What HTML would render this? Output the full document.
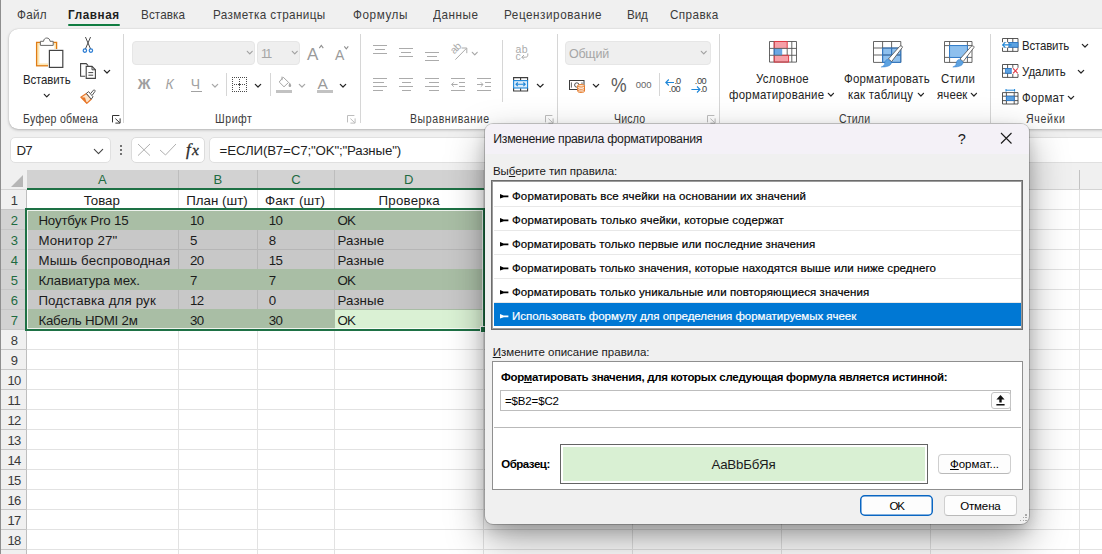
<!DOCTYPE html>
<html lang="ru"><head><meta charset="utf-8"><title>Excel</title>
<style>
*{box-sizing:border-box;margin:0;padding:0}
html,body{width:1102px;height:554px;overflow:hidden;background:#f0f0f0;font-family:"Liberation Sans",sans-serif;color:#242424}
#app{position:absolute;left:0;top:0;width:1102px;height:554px;overflow:hidden;background:#f0f0f0}
.a,.t,svg{position:absolute}
.t{white-space:pre}
svg{overflow:visible}
</style></head><body>
<div id="app">
<div class="t" style="left:17.0px;top:7px;font-size:13.3px;line-height:16px;letter-spacing:0.290px;color:#3b3b3b;transform:scaleX(0.88);transform-origin:0 0;">Файл</div>
<div class="t" style="left:68.3px;top:7px;font-size:13.3px;line-height:16px;letter-spacing:0.667px;color:#1f1f1f;font-weight:bold;transform:scaleX(0.88);transform-origin:0 0;">Главная</div>
<div class="a" style="left:68px;top:24px;width:52px;height:2px;background:#107c41;border-radius:1px"></div>
<div class="t" style="left:140.8px;top:7px;font-size:13.3px;line-height:16px;letter-spacing:0.115px;color:#3b3b3b;transform:scaleX(0.88);transform-origin:0 0;">Вставка</div>
<div class="t" style="left:212.5px;top:7px;font-size:13.3px;line-height:16px;letter-spacing:0.424px;color:#3b3b3b;transform:scaleX(0.88);transform-origin:0 0;">Разметка страницы</div>
<div class="t" style="left:353.0px;top:7px;font-size:13.3px;line-height:16px;letter-spacing:0.661px;color:#3b3b3b;transform:scaleX(0.88);transform-origin:0 0;">Формулы</div>
<div class="t" style="left:432.5px;top:7px;font-size:13.3px;line-height:16px;letter-spacing:0.610px;color:#3b3b3b;transform:scaleX(0.88);transform-origin:0 0;">Данные</div>
<div class="t" style="left:504.2px;top:7px;font-size:13.3px;line-height:16px;letter-spacing:0.628px;color:#3b3b3b;transform:scaleX(0.88);transform-origin:0 0;">Рецензирование</div>
<div class="t" style="left:627.3px;top:7px;font-size:13.3px;line-height:16px;letter-spacing:-0.180px;color:#3b3b3b;transform:scaleX(0.88);transform-origin:0 0;">Вид</div>
<div class="t" style="left:670.3px;top:7px;font-size:13.3px;line-height:16px;letter-spacing:0.453px;color:#3b3b3b;transform:scaleX(0.88);transform-origin:0 0;">Справка</div>
<div class="a" style="left:9px;top:29px;width:1110px;height:100px;background:#fff;border-radius:9px;box-shadow:0 1px 3px rgba(0,0,0,.25),0 0 1px rgba(0,0,0,.2)"></div>
<div class="a" style="left:123px;top:34px;width:1px;height:89px;background:#d6d6d6"></div>
<div class="a" style="left:360px;top:34px;width:1px;height:89px;background:#d6d6d6"></div>
<div class="a" style="left:557px;top:34px;width:1px;height:89px;background:#d6d6d6"></div>
<div class="a" style="left:718.5px;top:34px;width:1px;height:89px;background:#d6d6d6"></div>
<div class="a" style="left:989.5px;top:34px;width:1px;height:89px;background:#d6d6d6"></div>
<div class="t" style="left:22.8px;top:112px;font-size:12px;line-height:14px;letter-spacing:0.326px;color:#3b3b3b;transform:scaleX(0.88);transform-origin:0 0;">Буфер обмена</div>
<div class="t" style="left:215.0px;top:112px;font-size:12px;line-height:14px;letter-spacing:0.626px;color:#3b3b3b;transform:scaleX(0.88);transform-origin:0 0;">Шрифт</div>
<div class="t" style="left:410.4px;top:112px;font-size:12px;line-height:14px;letter-spacing:0.654px;color:#3b3b3b;transform:scaleX(0.88);transform-origin:0 0;">Выравнивание</div>
<div class="t" style="left:614.2px;top:112px;font-size:12px;line-height:14px;letter-spacing:0.188px;color:#3b3b3b;transform:scaleX(0.88);transform-origin:0 0;">Число</div>
<div class="t" style="left:838.5px;top:112px;font-size:12px;line-height:14px;letter-spacing:0.175px;color:#3b3b3b;transform:scaleX(0.88);transform-origin:0 0;">Стили</div>
<div class="t" style="left:1026.0px;top:112px;font-size:12px;line-height:14px;letter-spacing:0.792px;color:#3b3b3b;transform:scaleX(0.88);transform-origin:0 0;">Ячейки</div>
<div class="t" style="left:23.3px;top:72px;font-size:13px;line-height:16px;letter-spacing:-0.142px;color:#242424;transform:scaleX(0.88);transform-origin:0 0;">Вставить</div>
<svg style="left:44px;top:94px" width="5.5" height="3.8" viewBox="0 0 5.5 3.8"><path d="M0.3 0.3L2.75 2.8L5.2 0.3" fill="none" stroke="#242424" stroke-width="1.2" stroke-linecap="round" stroke-linejoin="round"/></svg>
<svg style="left:104px;top:70px" width="6" height="4" viewBox="0 0 6 4"><path d="M0.3 0.3L3 3L5.7 0.3" fill="none" stroke="#242424" stroke-width="1.2" stroke-linecap="round" stroke-linejoin="round"/></svg>
<div class="a" style="left:132px;top:41px;width:122.5px;height:24px;background:#efefef;border-radius:4px;border:1px solid #e6e6e6"></div>
<div class="a" style="left:257px;top:41px;width:42.5px;height:24px;background:#efefef;border-radius:4px;border:1px solid #e6e6e6"></div>
<div class="t" style="left:261.0px;top:47px;font-size:12.5px;line-height:15px;letter-spacing:-1.742px;color:#a6a6a6;">11</div>
<svg style="left:247px;top:51px" width="5.5" height="3.8" viewBox="0 0 5.5 3.8"><path d="M0.3 0.3L2.75 2.8L5.2 0.3" fill="none" stroke="#a2a2a2" stroke-width="1.2" stroke-linecap="round" stroke-linejoin="round"/></svg>
<svg style="left:291.5px;top:51px" width="5.5" height="3.8" viewBox="0 0 5.5 3.8"><path d="M0.3 0.3L2.75 2.8L5.2 0.3" fill="none" stroke="#a2a2a2" stroke-width="1.2" stroke-linecap="round" stroke-linejoin="round"/></svg>
<div class="t" style="left:307.0px;top:45px;font-size:17px;line-height:20px;letter-spacing:0.156px;color:#9a9a9a;">A</div>
<div class="t" style="left:335.0px;top:47px;font-size:14px;line-height:17px;letter-spacing:-0.344px;color:#9a9a9a;">A</div>
<div class="t" style="left:137.7px;top:76px;font-size:14px;line-height:17px;letter-spacing:0.644px;color:#9e9e9e;font-weight:bold;">Ж</div>
<div class="t" style="left:165.5px;top:76px;font-size:14px;line-height:17px;letter-spacing:0.834px;color:#a2a2a2;font-style:italic;">К</div>
<div class="t" style="left:190.7px;top:76px;font-size:14px;line-height:17px;letter-spacing:1.456px;color:#a2a2a2;">Ч</div>
<div class="a" style="left:190.5px;top:91px;width:11.5px;height:1px;background:#a2a2a2"></div>
<svg style="left:211.5px;top:84px" width="6" height="4" viewBox="0 0 6 4"><path d="M0.3 0.3L3 3L5.7 0.3" fill="none" stroke="#a8a8a8" stroke-width="1.2" stroke-linecap="round" stroke-linejoin="round"/></svg>
<div class="a" style="left:225.5px;top:73px;width:1px;height:23px;background:#d6d6d6"></div>
<svg style="left:255px;top:84px" width="6" height="4" viewBox="0 0 6 4"><path d="M0.3 0.3L3 3L5.7 0.3" fill="none" stroke="#242424" stroke-width="1.2" stroke-linecap="round" stroke-linejoin="round"/></svg>
<div class="a" style="left:269.5px;top:73px;width:1px;height:23px;background:#d6d6d6"></div>
<svg style="left:299px;top:84px" width="6" height="4" viewBox="0 0 6 4"><path d="M0.3 0.3L3 3L5.7 0.3" fill="none" stroke="#a8a8a8" stroke-width="1.2" stroke-linecap="round" stroke-linejoin="round"/></svg>
<div class="t" style="left:317.5px;top:74px;font-size:15.5px;line-height:19px;letter-spacing:4.156px;color:#9a9a9a;">A</div>
<div class="a" style="left:317px;top:90px;width:15.5px;height:3.2px;background:#c2c2c2"></div>
<div class="a" style="left:276px;top:90px;width:15.5px;height:3.2px;background:#c2c2c2"></div>
<svg style="left:340px;top:84px" width="6" height="4" viewBox="0 0 6 4"><path d="M0.3 0.3L3 3L5.7 0.3" fill="none" stroke="#242424" stroke-width="1.2" stroke-linecap="round" stroke-linejoin="round"/></svg>
<div class="a" style="left:502px;top:40px;width:1px;height:62px;background:#d6d6d6"></div>
<svg style="left:471.5px;top:51.5px" width="5.5" height="3.8" viewBox="0 0 5.5 3.8"><path d="M0.3 0.3L2.75 2.8L5.2 0.3" fill="none" stroke="#a8a8a8" stroke-width="1.2" stroke-linecap="round" stroke-linejoin="round"/></svg>
<svg style="left:536.5px;top:84px" width="6.5" height="4.2" viewBox="0 0 6.5 4.2"><path d="M0.3 0.3L3.25 3.2L6.2 0.3" fill="none" stroke="#242424" stroke-width="1.2" stroke-linecap="round" stroke-linejoin="round"/></svg>
<div class="a" style="left:565px;top:41px;width:145.5px;height:24px;background:#efefef;border-radius:4px;border:1px solid #e6e6e6"></div>
<div class="t" style="left:568.9px;top:47px;font-size:12.5px;line-height:15px;letter-spacing:-0.208px;color:#a6a6a6;">Общий</div>
<svg style="left:700.5px;top:51px" width="5.5" height="3.8" viewBox="0 0 5.5 3.8"><path d="M0.3 0.3L2.75 2.8L5.2 0.3" fill="none" stroke="#a2a2a2" stroke-width="1.2" stroke-linecap="round" stroke-linejoin="round"/></svg>
<svg style="left:592.5px;top:84px" width="6" height="4" viewBox="0 0 6 4"><path d="M0.3 0.3L3 3L5.7 0.3" fill="none" stroke="#242424" stroke-width="1.2" stroke-linecap="round" stroke-linejoin="round"/></svg>
<div class="t" style="left:610.5px;top:74px;font-size:19.5px;line-height:23px;letter-spacing:-0.566px;color:#5a5a5a;transform:scaleX(0.9);transform-origin:0 0;">%</div>
<div class="t" style="left:635.8px;top:79px;font-size:9.5px;line-height:11px;letter-spacing:-0.086px;color:#666;">000</div>
<div class="a" style="left:658.5px;top:73px;width:1px;height:23px;background:#d6d6d6"></div>
<div class="t" style="left:756.4px;top:71px;font-size:13px;line-height:16px;letter-spacing:0.353px;color:#242424;transform:scaleX(0.88);transform-origin:0 0;">Условное</div>
<div class="t" style="left:729.4px;top:87px;font-size:13px;line-height:16px;letter-spacing:0.280px;color:#242424;transform:scaleX(0.88);transform-origin:0 0;">форматирование</div>
<svg style="left:828.4px;top:92.8px" width="5.8" height="4" viewBox="0 0 5.8 4"><path d="M0.3 0.3L2.9 3L5.5 0.3" fill="none" stroke="#242424" stroke-width="1.2" stroke-linecap="round" stroke-linejoin="round"/></svg>
<div class="t" style="left:843.7px;top:71px;font-size:13px;line-height:16px;letter-spacing:0.260px;color:#242424;transform:scaleX(0.88);transform-origin:0 0;">Форматировать</div>
<div class="t" style="left:848.2px;top:87px;font-size:13px;line-height:16px;letter-spacing:0.263px;color:#242424;transform:scaleX(0.88);transform-origin:0 0;">как таблицу</div>
<svg style="left:917.8px;top:92.8px" width="5.8" height="4" viewBox="0 0 5.8 4"><path d="M0.3 0.3L2.9 3L5.5 0.3" fill="none" stroke="#242424" stroke-width="1.2" stroke-linecap="round" stroke-linejoin="round"/></svg>
<div class="t" style="left:940.8px;top:71px;font-size:13px;line-height:16px;letter-spacing:0.237px;color:#242424;transform:scaleX(0.88);transform-origin:0 0;">Стили</div>
<div class="t" style="left:937.3px;top:87px;font-size:13px;line-height:16px;letter-spacing:0.138px;color:#242424;transform:scaleX(0.88);transform-origin:0 0;">ячеек</div>
<svg style="left:971.4px;top:92.8px" width="5.8" height="4" viewBox="0 0 5.8 4"><path d="M0.3 0.3L2.9 3L5.5 0.3" fill="none" stroke="#242424" stroke-width="1.2" stroke-linecap="round" stroke-linejoin="round"/></svg>
<div class="t" style="left:1022.3px;top:38px;font-size:13px;line-height:16px;letter-spacing:-0.198px;color:#242424;transform:scaleX(0.88);transform-origin:0 0;">Вставить</div>
<svg style="left:1082.2px;top:43.5px" width="6" height="4" viewBox="0 0 6 4"><path d="M0.3 0.3L3 3L5.7 0.3" fill="none" stroke="#242424" stroke-width="1.2" stroke-linecap="round" stroke-linejoin="round"/></svg>
<div class="t" style="left:1022.3px;top:64px;font-size:13px;line-height:16px;letter-spacing:0.003px;color:#242424;transform:scaleX(0.88);transform-origin:0 0;">Удалить</div>
<svg style="left:1078px;top:69.5px" width="6" height="4" viewBox="0 0 6 4"><path d="M0.3 0.3L3 3L5.7 0.3" fill="none" stroke="#242424" stroke-width="1.2" stroke-linecap="round" stroke-linejoin="round"/></svg>
<div class="t" style="left:1022.3px;top:90px;font-size:13px;line-height:16px;letter-spacing:0.370px;color:#242424;transform:scaleX(0.88);transform-origin:0 0;">Формат</div>
<svg style="left:1067.7px;top:95.5px" width="6" height="4" viewBox="0 0 6 4"><path d="M0.3 0.3L3 3L5.7 0.3" fill="none" stroke="#242424" stroke-width="1.2" stroke-linecap="round" stroke-linejoin="round"/></svg>
<svg style="left:35px;top:37px" width="29" height="31" viewBox="0 0 29 31">
<rect x="1.6" y="5.4" width="20" height="23.4" fill="#fde7b6" stroke="#e07c14" stroke-width="1.3"/>
<rect x="4.4" y="8" width="15" height="18.4" fill="#fff"/>
<path d="M5.4 8.4V4.3H8.6C8.6 2.4 10 1 11.8 1S15 2.4 15 4.3H18.2V8.4Z" fill="#fff" stroke="#6a6a6a" stroke-width="1"/>
<rect x="13" y="12" width="16" height="19" fill="#fff"/>
<rect x="14.4" y="13.4" width="13.4" height="17" fill="#fff" stroke="#444" stroke-width="1.2"/>
</svg>
<svg style="left:82px;top:37px" width="12" height="17" viewBox="0 0 12 17">
<path d="M3.6 0.4L8.6 12M8.4 0.4L3.4 12" stroke="#4a4a4a" stroke-width="1" fill="none" stroke-linecap="round"/>
<circle cx="2.9" cy="13.6" r="1.7" fill="#fff" stroke="#2b7cd3" stroke-width="1.2"/>
<circle cx="8.9" cy="13.6" r="1.7" fill="#fff" stroke="#2b7cd3" stroke-width="1.2"/>
</svg>
<svg style="left:80px;top:63px" width="16" height="16" viewBox="0 0 16 16">
<path d="M5.2 13.2H0.6V0.6H6.2L8.2 2.6" fill="none" stroke="#444" stroke-width="1.1"/>
<path d="M6.2 3.4H12L15.4 6.8V15.4H6.2Z" fill="#fff" stroke="#444" stroke-width="1.1"/>
<path d="M12 3.4V6.8H15.4" fill="none" stroke="#444" stroke-width="1"/>
<path d="M8.4 9.6H13.2M8.4 12.2H13.2" stroke="#444" stroke-width="1"/>
</svg>
<svg style="left:80px;top:89px" width="17" height="15" viewBox="0 0 17 15">
<path d="M0.8 8.2L6.4 4.4L11.2 10.2L6.8 14.4Z" fill="#fbe3c8" stroke="#e8772a" stroke-width="1.2" stroke-linejoin="round"/>
<path d="M0.8 8.2L6.8 14.4L5 8.6Z" fill="#e8772a"/>
<path d="M6.4 4.4L8.6 2.6L13 7.8L11.2 10.2Z" fill="#fff" stroke="#555" stroke-width="1" stroke-linejoin="round"/>
<path d="M10.6 4.6L13.4 1.2C14.2 0.4 15.6 1.4 15 2.4L12.4 6" fill="#fff" stroke="#555" stroke-width="1" stroke-linejoin="round"/>
</svg>
<svg style="left:111.5px;top:114.5px" width="9" height="9" viewBox="0 0 9 9"><path d="M0.5 7.4V0.5H7.4" fill="none" stroke="#333" stroke-width="1"/><path d="M3.4 3.6L7.8 7.8M8.1 3.4V8.1H3.4" fill="none" stroke="#333" stroke-width="1"/></svg>
<svg style="left:347.3px;top:114.5px" width="9" height="9" viewBox="0 0 9 9"><path d="M0.5 7.4V0.5H7.4" fill="none" stroke="#bdbdbd" stroke-width="1"/><path d="M3.4 3.6L7.8 7.8M8.1 3.4V8.1H3.4" fill="none" stroke="#bdbdbd" stroke-width="1"/></svg>
<svg style="left:544.8px;top:114.5px" width="9" height="9" viewBox="0 0 9 9"><path d="M0.5 7.4V0.5H7.4" fill="none" stroke="#bdbdbd" stroke-width="1"/><path d="M3.4 3.6L7.8 7.8M8.1 3.4V8.1H3.4" fill="none" stroke="#bdbdbd" stroke-width="1"/></svg>
<svg style="left:706.8px;top:114.5px" width="9" height="9" viewBox="0 0 9 9"><path d="M0.5 7.4V0.5H7.4" fill="none" stroke="#bdbdbd" stroke-width="1"/><path d="M3.4 3.6L7.8 7.8M8.1 3.4V8.1H3.4" fill="none" stroke="#bdbdbd" stroke-width="1"/></svg>
<svg style="left:318.6px;top:45.2px" width="4.6" height="3.4" viewBox="0 0 4.6 3.4"><path d="M0.3 3.1L2.3 0.5L4.3 3.1" fill="none" stroke="#8f8f8f" stroke-width="1.1"/></svg>
<svg style="left:343.7px;top:45.8px" width="4.6" height="3.2" viewBox="0 0 4.6 3.2"><path d="M0.3 0.4L2.3 2.8L4.3 0.4" fill="none" stroke="#8f8f8f" stroke-width="1.1"/></svg>
<svg style="left:232px;top:77px" width="16" height="16" viewBox="0 0 16 16">
<g shape-rendering="crispEdges"><path d="M0 0.5H15M0 14.5H15M0.5 0V15M14.5 0V15" fill="none" stroke="#4a4a4a" stroke-width="1" stroke-dasharray="1 1"/>
<path d="M7.5 2V13M2 7.5H13" stroke="#4a4a4a" stroke-width="1" stroke-dasharray="1 1" fill="none"/>
<path d="M6 7.5H9M7.5 6V9" stroke="#4a4a4a" stroke-width="1" fill="none"/></g>
</svg>
<svg style="left:278px;top:76px" width="14" height="12" viewBox="0 0 14 12">
<path d="M5.2 1.2L10.6 6.4L6 10.8L1.2 6Z" fill="none" stroke="#a6a6a6" stroke-width="1" stroke-linejoin="round"/>
<path d="M4 0.6V4.2" stroke="#a6a6a6" stroke-width="1" fill="none"/>
<path d="M11.6 6.6C12.8 8.2 13.2 9 13.2 9.8A1.3 1.3 0 0 1 10.6 9.8C10.6 9 11 8.2 11.6 6.6Z" fill="#a6a6a6"/>
</svg>
<svg style="left:373px;top:45px" width="20" height="20" viewBox="0 0 20 20"><path d="M0 0.5H14M2 4.5H12M0 8.5H14" stroke="#ababab" stroke-width="1" fill="none" shape-rendering="crispEdges"/></svg>
<svg style="left:399px;top:48px" width="20" height="20" viewBox="0 0 20 20"><path d="M0 0.5H14M2 4.5H12M0 8.5H14" stroke="#ababab" stroke-width="1" fill="none" shape-rendering="crispEdges"/></svg>
<svg style="left:425px;top:52px" width="20" height="20" viewBox="0 0 20 20"><path d="M0 0.5H14M2 4.5H12M0 8.5H14" stroke="#ababab" stroke-width="1" fill="none" shape-rendering="crispEdges"/></svg>
<svg style="left:373px;top:78px" width="20" height="20" viewBox="0 0 20 20"><path d="M0 0.5H14M0 4.5H11M0 8.5H14M0 12.5H10" stroke="#ababab" stroke-width="1" fill="none" shape-rendering="crispEdges"/></svg>
<svg style="left:399px;top:78px" width="20" height="20" viewBox="0 0 20 20"><path d="M0 0.5H14M2.5 4.5H11.5M0 8.5H14M2.5 12.5H11.5" stroke="#ababab" stroke-width="1" fill="none" shape-rendering="crispEdges"/></svg>
<svg style="left:425px;top:78px" width="20" height="20" viewBox="0 0 20 20"><path d="M0 0.5H14M3.5 4.5H14M0 8.5H14M3.5 12.5H14" stroke="#ababab" stroke-width="1" fill="none" shape-rendering="crispEdges"/></svg>
<svg style="left:451px;top:78px" width="15" height="13" viewBox="0 0 15 13"><path d="M0 0.5H14M0 12.5H14M8 4.5H14M8 8.5H14" stroke="#ababab" stroke-width="1" fill="none" shape-rendering="crispEdges"/><path d="M6.6 6.5H0.6M2.8 4.3L0.6 6.5L2.8 8.7" stroke="#ababab" stroke-width="1" fill="none"/></svg>
<svg style="left:477px;top:78px" width="15" height="13" viewBox="0 0 15 13"><path d="M0 0.5H14M0 12.5H14M8 4.5H14M8 8.5H14" stroke="#ababab" stroke-width="1" fill="none" shape-rendering="crispEdges"/><path d="M0 6.5H6M3.8 4.3L6 6.5L3.8 8.7" stroke="#ababab" stroke-width="1" fill="none"/></svg>
<svg style="left:449px;top:43px" width="20" height="18" viewBox="0 0 20 18"><text x="0" y="0" font-size="10.5" fill="#ababab" font-family="Liberation Sans,sans-serif" transform="translate(5.2,11.6) rotate(-45)" letter-spacing="-0.3">ab</text><path d="M6.4 16.6L17.4 5.4M12.6 5H17.8V10.2" stroke="#ababab" stroke-width="1" fill="none"/></svg>
<div class="t" style="left:515.4px;top:43px;font-size:10.5px;line-height:13px;letter-spacing:0.506px;color:#ababab;">ab</div>
<div class="t" style="left:515.6px;top:50px;font-size:10.5px;line-height:13px;letter-spacing:-0.050px;color:#ababab;">c</div>
<svg style="left:521px;top:53px" width="8" height="8" viewBox="0 0 8 8"><path d="M6.8 0.4V2.2C6.8 3.6 5.8 4.2 4.6 4.2H0.8M3 2L0.8 4.2L3 6.4" stroke="#ababab" stroke-width="1" fill="none"/></svg>
<svg style="left:513px;top:77.4px" width="15.2" height="14.6" viewBox="0 0 15.2 14.6">
<path d="M0.6 3.6V0.6H14.6V3.6M0.6 11V14H14.6V11M7.6 0.6V3.4M7.6 11.2V14" stroke="#3d3d3d" stroke-width="1.1" fill="none"/>
<rect x="0.6" y="3.6" width="14" height="7.4" fill="#dcecfa" stroke="#1e86d8" stroke-width="1.1"/>
<path d="M3 7.3H12.2M4.8 5.5L3 7.3L4.8 9.1M10.4 5.5L12.2 7.3L10.4 9.1" stroke="#1e86d8" stroke-width="1.1" fill="none"/>
</svg>
<svg style="left:569px;top:80px" width="16.5" height="13" viewBox="0 0 16.5 13">
<rect x="0.5" y="0.5" width="14.5" height="9" fill="#fff" stroke="#3d3d3d" stroke-width="1"/>
<circle cx="7.8" cy="5" r="2.2" fill="none" stroke="#3d3d3d" stroke-width="0.9"/>
<path d="M2.4 2.4V7.6M13 2.4V4" stroke="#3d3d3d" stroke-width="0.8" fill="none"/>
<path d="M8.4 5.4H15.8V11.4C15.8 12.2 14.2 12.8 12.1 12.8S8.4 12.2 8.4 11.4Z" fill="#fff"/>
<ellipse cx="12.1" cy="5.8" rx="3.4" ry="1.3" fill="#fde6cf" stroke="#e3701a" stroke-width="0.9"/>
<path d="M8.7 5.8V11.2C8.7 12 10.2 12.5 12.1 12.5S15.5 12 15.5 11.2V5.8M8.7 8C8.7 8.8 10.2 9.3 12.1 9.3S15.5 8.8 15.5 8M8.7 9.8C8.7 10.6 10.2 11.1 12.1 11.1S15.5 10.6 15.5 9.8" fill="none" stroke="#e3701a" stroke-width="0.9"/>
</svg>
<div class="t" style="left:674.4px;top:76px;font-size:9.2px;line-height:11px;letter-spacing:-0.936px;color:#3d3d3d;">.0</div>
<div class="t" style="left:668.8px;top:84px;font-size:9.2px;line-height:11px;letter-spacing:-0.460px;color:#3d3d3d;">.00</div>
<svg style="left:665px;top:78.5px" width="9.5" height="7" viewBox="0 0 9.5 7"><path d="M9 3.5H0.8M3.8 0.5L0.8 3.5L3.8 6.5" stroke="#1e86d8" stroke-width="1.1" fill="none"/></svg>
<div class="t" style="left:694.8px;top:76px;font-size:9.2px;line-height:11px;letter-spacing:-0.460px;color:#3d3d3d;">.00</div>
<div class="t" style="left:700.4px;top:84px;font-size:9.2px;line-height:11px;letter-spacing:-0.936px;color:#3d3d3d;">.0</div>
<svg style="left:690.6px;top:85.5px" width="10" height="7" viewBox="0 0 10 7"><path d="M0.4 3.5H9M6 0.5L9 3.5L6 6.5" stroke="#1e86d8" stroke-width="1.1" fill="none"/></svg>
<svg style="left:769px;top:41.3px" width="28" height="21.6" viewBox="0 0 28 21.6">
<rect x="5.2" y="0.5" width="13" height="7" fill="#f6a0a8"/>
<rect x="5.2" y="7.5" width="8" height="7" fill="#6aa7e4"/>
<rect x="5.2" y="14.5" width="14.4" height="6.6" fill="#f6a0a8"/>
<path d="M0.5 0.5H27.5V21.1H0.5ZM0.5 7.4H27.5M0.5 14.3H27.5M5.2 0.5V21.1M22.8 0.5V21.1M18.2 7.4V14.3" stroke="#555" stroke-width="0.9" fill="none"/>
<path d="M5.2 0.5H18.2V7.4M5.2 7.4V0.5M5.2 14.3V21.1H19.6V14.3H13.2" stroke="#e03a45" stroke-width="1" fill="none"/>
<path d="M5.2 7.4V14.3" stroke="#2a7bd0" stroke-width="1" fill="none"/>
</svg>
<svg style="left:873px;top:41.3px" width="32" height="28" viewBox="0 0 32 28">
<rect x="9.6" y="7" width="18.2" height="14.4" fill="#8ec0ee"/>
<path d="M0.5 0.5H27.8V21.4H0.5ZM0.5 7H27.8M0.5 14H27.8M9.6 0.5V21.4M18.6 0.5V21.4" stroke="#555" stroke-width="0.9" fill="none"/>
<path d="M9.6 7H27.8V21.4H9.6ZM18.6 7V21.4M9.6 14H27.8" stroke="#2a7bd0" stroke-width="0.9" fill="none"/>
<path d="M29.4 6.4L18.6 20.6L15.4 18L26.6 5.4C27.6 4.4 30.2 5.2 29.4 6.4Z" fill="#fff" stroke="#5a5a5a" stroke-width="0.9" stroke-linejoin="round"/><path d="M15.2 18.4L18.4 21C18.8 23.6 16 26.2 8.2 26C10.4 25.2 11.4 24 11.6 22.4C11.8 19.8 13.4 18.2 15.2 18.4Z" fill="#5da2e0" stroke="#2a7bd0" stroke-width="0.5"/></svg>
<svg style="left:943.7px;top:41.3px" width="32" height="28" viewBox="0 0 32 28">
<path d="M0.5 0.5H28V21.4H0.5ZM0.5 4.6H28M0.5 16.4H28M5.6 0.5V21.4M23.4 0.5V21.4" stroke="#555" stroke-width="0.9" fill="none"/>
<rect x="5.6" y="4.6" width="17.8" height="11.8" fill="#8ec0ee" stroke="#2a7bd0" stroke-width="0.9"/>
<path d="M30 6.4L19.2 20.6L16 18L27.2 5.4C28.2 4.4 30.8 5.2 30 6.4Z" fill="#fff" stroke="#5a5a5a" stroke-width="0.9" stroke-linejoin="round"/><path d="M15.8 18.4L19 21C19.4 23.6 16.6 26.2 8.8 26C11 25.2 12 24 12.2 22.4C12.4 19.8 14 18.2 15.8 18.4Z" fill="#5da2e0" stroke="#2a7bd0" stroke-width="0.5"/></svg>
<svg style="left:1001.7px;top:38px" width="17" height="14" viewBox="0 0 17 14">
<path d="M0.5 0.5H16V13.4H0.5ZM0.5 4.6H16M0.5 9.2H16M5.6 0.5V13.4M10.8 0.5V13.4" stroke="#444" stroke-width="0.9" fill="none"/>
<rect x="-0.4" y="4.2" width="6.4" height="5.4" fill="#fff"/>
<rect x="7" y="4.6" width="9" height="4.6" fill="#5da2e0" stroke="#2a7bd0" stroke-width="0.8"/>
<path d="M9.6 6.9H0.6M3.4 4.1L0.6 6.9L3.4 9.7" stroke="#1e86d8" stroke-width="1.1" fill="none"/>
</svg>
<svg style="left:1001.7px;top:64.2px" width="17" height="14" viewBox="0 0 17 14">
<path d="M0.5 0.5H16V13.4H0.5ZM0.5 4.6H16M0.5 9.2H16M5.6 0.5V13.4M10.8 0.5V13.4" stroke="#444" stroke-width="0.9" fill="none"/>
<rect x="9.6" y="3.8" width="7.4" height="6.2" fill="#fff"/>
<rect x="3.6" y="4.6" width="5.6" height="4.6" fill="#5da2e0" stroke="#2a7bd0" stroke-width="0.8"/>
<path d="M11 4.4L15.8 9.4M15.8 4.4L11 9.4" stroke="#e03a45" stroke-width="1.1" fill="none"/>
</svg>
<svg style="left:1001.7px;top:89.2px" width="17" height="16" viewBox="0 0 17 16">
<path d="M0.5 3.6H16V15H0.5ZM0.5 7.2H16M0.5 11.6H16M4.4 3.6V15M12.2 3.6V15" stroke="#444" stroke-width="0.9" fill="none"/>
<rect x="4.4" y="7.2" width="7.8" height="4.4" fill="#5da2e0" stroke="#2a7bd0" stroke-width="0.8"/>
<path d="M4 1.2H12.6M4 0V2.6M12.6 0V2.6" stroke="#1e86d8" stroke-width="1" fill="none"/>
</svg>
<div class="a" style="left:9.5px;top:137px;width:101.5px;height:26px;background:#fff;border-radius:5px;border:1px solid #e0e0e0"></div>
<div class="t" style="left:16.5px;top:143px;font-size:13.3px;line-height:16px;letter-spacing:-0.750px;color:#262626;">D7</div>
<svg style="left:94px;top:149px" width="9" height="5.6" viewBox="0 0 9 5.6"><path d="M0.3 0.3L4.5 4.6L8.7 0.3" fill="none" stroke="#444" stroke-width="1.1" stroke-linecap="round" stroke-linejoin="round"/></svg>
<div class="a" style="left:120px;top:145px;width:2px;height:2px;background:#4a4a4a;border-radius:1px"></div>
<div class="a" style="left:120px;top:149px;width:2px;height:2px;background:#4a4a4a;border-radius:1px"></div>
<div class="a" style="left:120px;top:153px;width:2px;height:2px;background:#4a4a4a;border-radius:1px"></div>
<div class="a" style="left:131px;top:137px;width:73.5px;height:26px;background:#fff;border-radius:5px;border:1px solid #dcdcdc"></div>
<svg style="left:138px;top:144px" width="12" height="12" viewBox="0 0 12 12"><path d="M0 0L12 11.6M12 0L0 11.6" stroke="#b0b0b0" stroke-width="1" fill="none"/></svg>
<svg style="left:160px;top:144px" width="16" height="11.4" viewBox="0 0 16 11.4"><path d="M0 6L5.5 11L16 0" stroke="#b0b0b0" stroke-width="1" fill="none"/></svg>
<div class="t" style="left:186.0px;top:140px;font-size:17px;line-height:20px;letter-spacing:1.666px;color:#2b2b2b;font-family:'Liberation Serif',serif;font-style:italic;-webkit-text-stroke:0.3px #2b2b2b;">f</div>
<div class="t" style="left:192.0px;top:140px;font-size:15.5px;line-height:19px;letter-spacing:0.609px;color:#2b2b2b;font-family:'Liberation Serif',serif;font-style:italic;-webkit-text-stroke:0.3px #2b2b2b;">x</div>
<div class="a" style="left:209px;top:137px;width:900px;height:26px;background:#fff;border-radius:5px;border:1px solid #e0e0e0"></div>
<div class="t" style="left:219.6px;top:143px;font-size:13.3px;line-height:16px;letter-spacing:-0.158px;color:#1f1f1f;">=ЕСЛИ(B7=C7;&quot;OK&quot;;&quot;Разные&quot;)</div>
<div class="a" style="left:0px;top:170px;width:1102px;height:384px;background:#fff"></div>
<div class="a" style="left:0px;top:170px;width:1102px;height:19px;background:#f0f0f0"></div>
<div class="a" style="left:27px;top:170px;width:457px;height:18px;background:#d2d2d2"></div>
<div class="a" style="left:0px;top:189px;width:27px;height:365px;background:#f0f0f0"></div>
<div class="a" style="left:0px;top:210px;width:27px;height:120px;background:#d2d2d2"></div>
<svg style="left:10.8px;top:174.6px" width="12" height="12" viewBox="0 0 12 12"><path d="M12 0V12H0Z" fill="#b6b6b6"/></svg>
<div class="a" style="left:178px;top:189px;width:1px;height:365px;background:#e2e2e2"></div>
<div class="a" style="left:257px;top:189px;width:1px;height:365px;background:#e2e2e2"></div>
<div class="a" style="left:334px;top:189px;width:1px;height:365px;background:#e2e2e2"></div>
<div class="a" style="left:483px;top:189px;width:1px;height:365px;background:#e2e2e2"></div>
<div class="a" style="left:632px;top:189px;width:1px;height:365px;background:#e2e2e2"></div>
<div class="a" style="left:781px;top:189px;width:1px;height:365px;background:#e2e2e2"></div>
<div class="a" style="left:930px;top:189px;width:1px;height:365px;background:#e2e2e2"></div>
<div class="a" style="left:1079px;top:189px;width:1px;height:365px;background:#e2e2e2"></div>
<div class="a" style="left:26px;top:189px;width:1px;height:365px;background:#bebebe"></div>
<div class="a" style="left:27px;top:209px;width:1075px;height:1px;background:#e2e2e2"></div>
<div class="a" style="left:0px;top:209px;width:27px;height:1px;background:#c6c6c6"></div>
<div class="a" style="left:27px;top:229px;width:1075px;height:1px;background:#e2e2e2"></div>
<div class="a" style="left:0px;top:229px;width:27px;height:1px;background:#c6c6c6"></div>
<div class="a" style="left:27px;top:249px;width:1075px;height:1px;background:#e2e2e2"></div>
<div class="a" style="left:0px;top:249px;width:27px;height:1px;background:#c6c6c6"></div>
<div class="a" style="left:27px;top:269px;width:1075px;height:1px;background:#e2e2e2"></div>
<div class="a" style="left:0px;top:269px;width:27px;height:1px;background:#c6c6c6"></div>
<div class="a" style="left:27px;top:289px;width:1075px;height:1px;background:#e2e2e2"></div>
<div class="a" style="left:0px;top:289px;width:27px;height:1px;background:#c6c6c6"></div>
<div class="a" style="left:27px;top:309px;width:1075px;height:1px;background:#e2e2e2"></div>
<div class="a" style="left:0px;top:309px;width:27px;height:1px;background:#c6c6c6"></div>
<div class="a" style="left:27px;top:329px;width:1075px;height:1px;background:#e2e2e2"></div>
<div class="a" style="left:0px;top:329px;width:27px;height:1px;background:#c6c6c6"></div>
<div class="a" style="left:27px;top:349px;width:1075px;height:1px;background:#e2e2e2"></div>
<div class="a" style="left:0px;top:349px;width:27px;height:1px;background:#c6c6c6"></div>
<div class="a" style="left:27px;top:369px;width:1075px;height:1px;background:#e2e2e2"></div>
<div class="a" style="left:0px;top:369px;width:27px;height:1px;background:#c6c6c6"></div>
<div class="a" style="left:27px;top:389px;width:1075px;height:1px;background:#e2e2e2"></div>
<div class="a" style="left:0px;top:389px;width:27px;height:1px;background:#c6c6c6"></div>
<div class="a" style="left:27px;top:409px;width:1075px;height:1px;background:#e2e2e2"></div>
<div class="a" style="left:0px;top:409px;width:27px;height:1px;background:#c6c6c6"></div>
<div class="a" style="left:27px;top:429px;width:1075px;height:1px;background:#e2e2e2"></div>
<div class="a" style="left:0px;top:429px;width:27px;height:1px;background:#c6c6c6"></div>
<div class="a" style="left:27px;top:449px;width:1075px;height:1px;background:#e2e2e2"></div>
<div class="a" style="left:0px;top:449px;width:27px;height:1px;background:#c6c6c6"></div>
<div class="a" style="left:27px;top:469px;width:1075px;height:1px;background:#e2e2e2"></div>
<div class="a" style="left:0px;top:469px;width:27px;height:1px;background:#c6c6c6"></div>
<div class="a" style="left:27px;top:489px;width:1075px;height:1px;background:#e2e2e2"></div>
<div class="a" style="left:0px;top:489px;width:27px;height:1px;background:#c6c6c6"></div>
<div class="a" style="left:27px;top:509px;width:1075px;height:1px;background:#e2e2e2"></div>
<div class="a" style="left:0px;top:509px;width:27px;height:1px;background:#c6c6c6"></div>
<div class="a" style="left:27px;top:529px;width:1075px;height:1px;background:#e2e2e2"></div>
<div class="a" style="left:0px;top:529px;width:27px;height:1px;background:#c6c6c6"></div>
<div class="a" style="left:27px;top:549px;width:1075px;height:1px;background:#e2e2e2"></div>
<div class="a" style="left:0px;top:549px;width:27px;height:1px;background:#c6c6c6"></div>
<div class="a" style="left:27px;top:569px;width:1075px;height:1px;background:#e2e2e2"></div>
<div class="a" style="left:0px;top:569px;width:27px;height:1px;background:#c6c6c6"></div>
<div class="a" style="left:178px;top:170px;width:1px;height:18px;background:#bdbdbd"></div>
<div class="a" style="left:257px;top:170px;width:1px;height:18px;background:#bdbdbd"></div>
<div class="a" style="left:334px;top:170px;width:1px;height:18px;background:#bdbdbd"></div>
<div class="a" style="left:483px;top:170px;width:1px;height:19px;background:#c2c2c2"></div>
<div class="a" style="left:632px;top:170px;width:1px;height:19px;background:#c2c2c2"></div>
<div class="a" style="left:781px;top:170px;width:1px;height:19px;background:#c2c2c2"></div>
<div class="a" style="left:930px;top:170px;width:1px;height:19px;background:#c2c2c2"></div>
<div class="a" style="left:1079px;top:170px;width:1px;height:19px;background:#c2c2c2"></div>
<div class="a" style="left:0px;top:189px;width:1102px;height:1px;background:#d4d4d4"></div>
<div class="t" style="left:98.0px;top:172px;font-size:13px;line-height:16px;letter-spacing:0.328px;color:#1e6b41;">A</div>
<div class="t" style="left:213.5px;top:172px;font-size:13px;line-height:16px;letter-spacing:-0.672px;color:#1e6b41;">B</div>
<div class="t" style="left:291.2px;top:172px;font-size:13px;line-height:16px;letter-spacing:-0.791px;color:#1e6b41;">C</div>
<div class="t" style="left:404.1px;top:172px;font-size:13px;line-height:16px;letter-spacing:-0.591px;color:#1e6b41;">D</div>
<div class="a" style="left:27px;top:188px;width:457px;height:2px;background:#1e7145"></div>
<div class="t" style="left:10.7px;top:193px;font-size:13px;line-height:16px;letter-spacing:-0.734px;color:#3a3a3a;">1</div>
<div class="t" style="left:10.7px;top:213px;font-size:13px;line-height:16px;letter-spacing:-0.734px;color:#1e6b41;">2</div>
<div class="t" style="left:10.7px;top:233px;font-size:13px;line-height:16px;letter-spacing:-0.734px;color:#1e6b41;">3</div>
<div class="t" style="left:10.7px;top:253px;font-size:13px;line-height:16px;letter-spacing:-0.734px;color:#1e6b41;">4</div>
<div class="t" style="left:10.7px;top:273px;font-size:13px;line-height:16px;letter-spacing:-0.734px;color:#1e6b41;">5</div>
<div class="t" style="left:10.7px;top:293px;font-size:13px;line-height:16px;letter-spacing:-0.734px;color:#1e6b41;">6</div>
<div class="t" style="left:10.7px;top:313px;font-size:13px;line-height:16px;letter-spacing:-0.734px;color:#1e6b41;">7</div>
<div class="t" style="left:10.7px;top:333px;font-size:13px;line-height:16px;letter-spacing:-0.734px;color:#3a3a3a;">8</div>
<div class="t" style="left:10.7px;top:353px;font-size:13px;line-height:16px;letter-spacing:-0.734px;color:#3a3a3a;">9</div>
<div class="t" style="left:7.4px;top:373px;font-size:13px;line-height:16px;letter-spacing:-0.734px;color:#3a3a3a;">10</div>
<div class="t" style="left:7.4px;top:393px;font-size:13px;line-height:16px;letter-spacing:-0.250px;color:#3a3a3a;">11</div>
<div class="t" style="left:7.4px;top:413px;font-size:13px;line-height:16px;letter-spacing:-0.734px;color:#3a3a3a;">12</div>
<div class="t" style="left:7.4px;top:433px;font-size:13px;line-height:16px;letter-spacing:-0.734px;color:#3a3a3a;">13</div>
<div class="t" style="left:7.4px;top:453px;font-size:13px;line-height:16px;letter-spacing:-0.734px;color:#3a3a3a;">14</div>
<div class="t" style="left:7.4px;top:473px;font-size:13px;line-height:16px;letter-spacing:-0.734px;color:#3a3a3a;">15</div>
<div class="t" style="left:7.4px;top:493px;font-size:13px;line-height:16px;letter-spacing:-0.734px;color:#3a3a3a;">16</div>
<div class="t" style="left:7.4px;top:513px;font-size:13px;line-height:16px;letter-spacing:-0.734px;color:#3a3a3a;">17</div>
<div class="t" style="left:7.4px;top:533px;font-size:13px;line-height:16px;letter-spacing:-0.734px;color:#3a3a3a;">18</div>
<div class="a" style="left:27px;top:230px;width:457px;height:20px;background:#c8c8c8"></div>
<div class="a" style="left:178px;top:230px;width:1px;height:19px;background:#b6b6b6"></div>
<div class="a" style="left:257px;top:230px;width:1px;height:19px;background:#b6b6b6"></div>
<div class="a" style="left:334px;top:230px;width:1px;height:19px;background:#b6b6b6"></div>
<div class="a" style="left:27px;top:249px;width:457px;height:1px;background:#b6b6b6"></div>
<div class="a" style="left:27px;top:250px;width:457px;height:20px;background:#c8c8c8"></div>
<div class="a" style="left:178px;top:250px;width:1px;height:19px;background:#b6b6b6"></div>
<div class="a" style="left:257px;top:250px;width:1px;height:19px;background:#b6b6b6"></div>
<div class="a" style="left:334px;top:250px;width:1px;height:19px;background:#b6b6b6"></div>
<div class="a" style="left:27px;top:269px;width:457px;height:1px;background:#b6b6b6"></div>
<div class="a" style="left:27px;top:290px;width:457px;height:20px;background:#c8c8c8"></div>
<div class="a" style="left:178px;top:290px;width:1px;height:19px;background:#b6b6b6"></div>
<div class="a" style="left:257px;top:290px;width:1px;height:19px;background:#b6b6b6"></div>
<div class="a" style="left:334px;top:290px;width:1px;height:19px;background:#b6b6b6"></div>
<div class="a" style="left:27px;top:309px;width:457px;height:1px;background:#b6b6b6"></div>
<div class="a" style="left:27px;top:209px;width:457px;height:21px;background:#a9bea5"></div>
<div class="a" style="left:27px;top:269px;width:457px;height:21px;background:#a9bea5"></div>
<div class="a" style="left:27px;top:309px;width:457px;height:21px;background:#a9bea5"></div>
<div class="a" style="left:335px;top:310px;width:148px;height:19px;background:#daf1d4"></div>
<div class="t" style="left:83.7px;top:193px;font-size:13.3px;line-height:16px;letter-spacing:-0.018px;color:#1b1b1b;">Товар</div>
<div class="t" style="left:186.2px;top:193px;font-size:13.3px;line-height:16px;letter-spacing:0.014px;color:#1b1b1b;">План (шт)</div>
<div class="t" style="left:265.0px;top:193px;font-size:13.3px;line-height:16px;letter-spacing:0.125px;color:#1b1b1b;">Факт (шт)</div>
<div class="t" style="left:378.5px;top:193px;font-size:13.3px;line-height:16px;letter-spacing:0.242px;color:#1b1b1b;">Проверка</div>
<div class="t" style="left:38.4px;top:213px;font-size:13.3px;line-height:16px;letter-spacing:-0.154px;color:#1b1b1b;">Ноутбук Pro 15</div>
<div class="t" style="left:190.0px;top:213px;font-size:13.3px;line-height:16px;letter-spacing:-0.648px;color:#1b1b1b;">10</div>
<div class="t" style="left:268.8px;top:213px;font-size:13.3px;line-height:16px;letter-spacing:-0.648px;color:#1b1b1b;">10</div>
<div class="t" style="left:337.5px;top:213px;font-size:13.3px;line-height:16px;letter-spacing:-0.959px;color:#1b1b1b;">OK</div>
<div class="t" style="left:38.4px;top:233px;font-size:13.3px;line-height:16px;letter-spacing:0.161px;color:#1b1b1b;">Монитор 27&quot;</div>
<div class="t" style="left:190.0px;top:233px;font-size:13.3px;line-height:16px;letter-spacing:-0.656px;color:#1b1b1b;">5</div>
<div class="t" style="left:268.8px;top:233px;font-size:13.3px;line-height:16px;letter-spacing:-0.656px;color:#1b1b1b;">8</div>
<div class="t" style="left:337.5px;top:233px;font-size:13.3px;line-height:16px;letter-spacing:0.104px;color:#1b1b1b;">Разные</div>
<div class="t" style="left:38.4px;top:253px;font-size:13.3px;line-height:16px;letter-spacing:0.162px;color:#1b1b1b;">Мышь беспроводная</div>
<div class="t" style="left:190.0px;top:253px;font-size:13.3px;line-height:16px;letter-spacing:-0.648px;color:#1b1b1b;">20</div>
<div class="t" style="left:268.8px;top:253px;font-size:13.3px;line-height:16px;letter-spacing:-0.648px;color:#1b1b1b;">15</div>
<div class="t" style="left:337.5px;top:253px;font-size:13.3px;line-height:16px;letter-spacing:0.104px;color:#1b1b1b;">Разные</div>
<div class="t" style="left:38.4px;top:273px;font-size:13.3px;line-height:16px;letter-spacing:-0.048px;color:#1b1b1b;">Клавиатура мех.</div>
<div class="t" style="left:190.0px;top:273px;font-size:13.3px;line-height:16px;letter-spacing:-0.656px;color:#1b1b1b;">7</div>
<div class="t" style="left:268.8px;top:273px;font-size:13.3px;line-height:16px;letter-spacing:-0.656px;color:#1b1b1b;">7</div>
<div class="t" style="left:337.5px;top:273px;font-size:13.3px;line-height:16px;letter-spacing:-0.959px;color:#1b1b1b;">OK</div>
<div class="t" style="left:38.4px;top:293px;font-size:13.3px;line-height:16px;letter-spacing:0.159px;color:#1b1b1b;">Подставка для рук</div>
<div class="t" style="left:190.0px;top:293px;font-size:13.3px;line-height:16px;letter-spacing:-0.648px;color:#1b1b1b;">12</div>
<div class="t" style="left:268.8px;top:293px;font-size:13.3px;line-height:16px;letter-spacing:-0.656px;color:#1b1b1b;">0</div>
<div class="t" style="left:337.5px;top:293px;font-size:13.3px;line-height:16px;letter-spacing:0.104px;color:#1b1b1b;">Разные</div>
<div class="t" style="left:38.4px;top:313px;font-size:13.3px;line-height:16px;letter-spacing:-0.204px;color:#1b1b1b;">Кабель HDMI 2м</div>
<div class="t" style="left:190.0px;top:313px;font-size:13.3px;line-height:16px;letter-spacing:-0.648px;color:#1b1b1b;">30</div>
<div class="t" style="left:268.8px;top:313px;font-size:13.3px;line-height:16px;letter-spacing:-0.648px;color:#1b1b1b;">30</div>
<div class="t" style="left:337.5px;top:313px;font-size:13.3px;line-height:16px;letter-spacing:-0.959px;color:#1b1b1b;">OK</div>
<div class="a" style="left:25px;top:208px;width:460px;height:123px;border:2px solid #1e7145"></div>
<div class="a" style="left:27px;top:210px;width:456px;height:119px;border:1px solid rgba(255,255,255,.8)"></div>
<div class="a" style="left:480.5px;top:326.5px;width:5px;height:5px;background:#1e7145;border:1px solid #fff;box-sizing:content-box;margin:-1px"></div>
<div class="a" style="left:485px;top:123.5px;width:544px;height:400px;border-radius:8px;background:#f0f0f0;box-shadow:0 16px 38px rgba(0,0,0,.36),0 6px 14px rgba(0,0,0,.15),0 0 0 1px rgba(0,0,0,.20);overflow:hidden"><div class="a" style="left:0;top:0;width:544px;height:30px;background:#f4f1f7"></div></div>
<div class="t" style="left:493.2px;top:132px;font-size:12.3px;line-height:15px;letter-spacing:-0.248px;color:#1a1a1a;">Изменение правила форматирования</div>
<div class="t" style="left:957.7px;top:131px;font-size:14.5px;line-height:17px;letter-spacing:-1.578px;color:#1a1a1a;">?</div>
<svg style="left:1001px;top:133px" width="10.5" height="10.5" viewBox="0 0 10.5 10.5"><path d="M0 0L10.5 10.5M10.5 0L0 10.5" stroke="#1a1a1a" stroke-width="1.1" fill="none"/></svg>
<div class="t" style="left:493.0px;top:164px;font-size:11.5px;line-height:14px;letter-spacing:-0.053px;color:#1a1a1a;">Вы<u>б</u>ерите тип правила:</div>
<div class="a" style="left:491px;top:180px;width:532px;height:149.5px;background:#fff;border:1px solid #6c6c6c;box-shadow:inset 0 0 0 1px #9c9c9c"></div>
<div class="a" style="left:494px;top:206px;width:526.5px;height:1px;background:#e8e8e8"></div>
<svg style="left:500.4px;top:193.7px" width="8.4" height="4.6" viewBox="0 0 8.4 4.6"><path d="M0 0L3.6 1.5H8.4V3.2H3.8L0 4.5Z" fill="#000"/></svg>
<div class="t" style="left:512.0px;top:189px;font-size:11.5px;line-height:14px;letter-spacing:0.123px;color:#000;-webkit-text-stroke-width:0.2px;">Форматировать все ячейки на основании их значений</div>
<div class="a" style="left:494px;top:230px;width:526.5px;height:1px;background:#e8e8e8"></div>
<svg style="left:500.4px;top:217.7px" width="8.4" height="4.6" viewBox="0 0 8.4 4.6"><path d="M0 0L3.6 1.5H8.4V3.2H3.8L0 4.5Z" fill="#000"/></svg>
<div class="t" style="left:512.0px;top:213px;font-size:11.5px;line-height:14px;letter-spacing:0.134px;color:#000;-webkit-text-stroke-width:0.2px;">Форматировать только ячейки, которые содержат</div>
<div class="a" style="left:494px;top:254px;width:526.5px;height:1px;background:#e8e8e8"></div>
<svg style="left:500.4px;top:241.7px" width="8.4" height="4.6" viewBox="0 0 8.4 4.6"><path d="M0 0L3.6 1.5H8.4V3.2H3.8L0 4.5Z" fill="#000"/></svg>
<div class="t" style="left:512.0px;top:237px;font-size:11.5px;line-height:14px;letter-spacing:0.052px;color:#000;-webkit-text-stroke-width:0.2px;">Форматировать только первые или последние значения</div>
<div class="a" style="left:494px;top:278px;width:526.5px;height:1px;background:#e8e8e8"></div>
<svg style="left:500.4px;top:265.7px" width="8.4" height="4.6" viewBox="0 0 8.4 4.6"><path d="M0 0L3.6 1.5H8.4V3.2H3.8L0 4.5Z" fill="#000"/></svg>
<div class="t" style="left:512.0px;top:261px;font-size:11.5px;line-height:14px;letter-spacing:0.057px;color:#000;-webkit-text-stroke-width:0.2px;">Форматировать только значения, которые находятся выше или ниже среднего</div>
<div class="a" style="left:494px;top:302px;width:526.5px;height:1px;background:#e8e8e8"></div>
<svg style="left:500.4px;top:289.7px" width="8.4" height="4.6" viewBox="0 0 8.4 4.6"><path d="M0 0L3.6 1.5H8.4V3.2H3.8L0 4.5Z" fill="#000"/></svg>
<div class="t" style="left:512.0px;top:285px;font-size:11.5px;line-height:14px;letter-spacing:0.074px;color:#000;-webkit-text-stroke-width:0.2px;">Форматировать только уникальные или повторяющиеся значения</div>
<div class="a" style="left:494px;top:303px;width:526.5px;height:23px;background:#0078d4"></div>
<svg style="left:500.4px;top:313.7px" width="8.4" height="4.6" viewBox="0 0 8.4 4.6"><path d="M0 0L3.6 1.5H8.4V3.2H3.8L0 4.5Z" fill="#fff"/></svg>
<div class="t" style="left:512.0px;top:309px;font-size:11.5px;line-height:14px;letter-spacing:-0.034px;color:#fff;-webkit-text-stroke-width:0.2px;">Использовать формулу для определения форматируемых ячеек</div>
<div class="t" style="left:492.7px;top:345px;font-size:11.5px;line-height:14px;letter-spacing:0.001px;color:#1a1a1a;"><u>И</u>змените описание правила:</div>
<div class="a" style="left:491.5px;top:361.2px;width:531px;height:129px;background:#fff;border:1px solid #8f8f8f"></div>
<div class="t" style="left:501.0px;top:370px;font-size:11.5px;line-height:14px;letter-spacing:-0.301px;color:#000;font-weight:bold;">Фор<u>м</u>атировать значения, для которых следующая формула является истинной:</div>
<div class="a" style="left:500.3px;top:389.6px;width:511px;height:21px;background:#fff;border:1px solid #bdbdbd"></div>
<div class="t" style="left:505.0px;top:394px;font-size:11.5px;line-height:14px;letter-spacing:-0.150px;color:#000;">=$B2=$C2</div>
<div class="a" style="left:990.5px;top:391.5px;width:20.5px;height:17.8px;background:#fdfdfd;border:1px solid #c4c4c4;border-radius:3px"></div>
<svg style="left:996px;top:395px" width="9" height="11" viewBox="0 0 9 11"><path d="M4.5 0L8.6 4.6H5.7V7.6H3.3V4.6H0.4Z M0.4 9H8.6V10.4H0.4Z" fill="#111"/></svg>
<div class="a" style="left:493.5px;top:427px;width:527px;height:1px;background:#b9b9b9"></div>
<div class="t" style="left:501.2px;top:457px;font-size:11.5px;line-height:14px;letter-spacing:-0.484px;color:#000;font-weight:bold;">Образец:</div>
<div class="a" style="left:560px;top:444px;width:368px;height:39.5px;background:#fff;border:1px solid #646464"></div>
<div class="a" style="left:563px;top:447px;width:362px;height:33.5px;background:#d9f0d3"></div>
<div class="t" style="left:711.5px;top:457px;font-size:13.3px;line-height:16px;letter-spacing:-0.223px;color:#1b1b1b;">AaBbБбЯя</div>
<div class="a" style="left:938px;top:453.5px;width:72.8px;height:20px;background:#fdfdfd;border:1px solid #cfcfcf;border-bottom-color:#b9b9b9;border-radius:4px"></div>
<div class="t" style="left:950.0px;top:457px;font-size:11.5px;line-height:14px;letter-spacing:-0.019px;color:#000;"><u>Ф</u>ормат...</div>
<svg style="left:859px;top:494px" width="75" height="23" viewBox="0 0 75 23"><rect x="1.75" y="1.75" width="71.5" height="19.5" rx="4" fill="#fdfdfd" stroke="#0a66c2" stroke-width="1.5"/></svg>
<div class="t" style="left:889.4px;top:499px;font-size:11.5px;line-height:14px;letter-spacing:-1.012px;color:#000;">OK</div>
<div class="a" style="left:944px;top:495px;width:72.8px;height:21px;background:#fdfdfd;border:1px solid #cfcfcf;border-bottom-color:#b9b9b9;border-radius:4px"></div>
<div class="t" style="left:960.2px;top:499px;font-size:11.5px;line-height:14px;letter-spacing:-0.144px;color:#000;">Отмена</div>
<div class="a" style="left:1025.2px;top:519.6px;width:1.6px;height:1.6px;background:#a8a8a8"></div>
<div class="a" style="left:1022.5px;top:519.6px;width:1.6px;height:1.6px;background:#a8a8a8"></div>
<div class="a" style="left:1025.2px;top:516.9px;width:1.6px;height:1.6px;background:#a8a8a8"></div>
<div class="a" style="left:1019.8px;top:519.6px;width:1.6px;height:1.6px;background:#a8a8a8"></div>
<div class="a" style="left:1025.2px;top:514.2px;width:1.6px;height:1.6px;background:#a8a8a8"></div>
<div class="a" style="left:1022.5px;top:516.9px;width:1.6px;height:1.6px;background:#a8a8a8"></div>
<div class="a" style="left:0px;top:0px;width:1px;height:554px;background:#8e8e8e"></div>
</div>
</body></html>
